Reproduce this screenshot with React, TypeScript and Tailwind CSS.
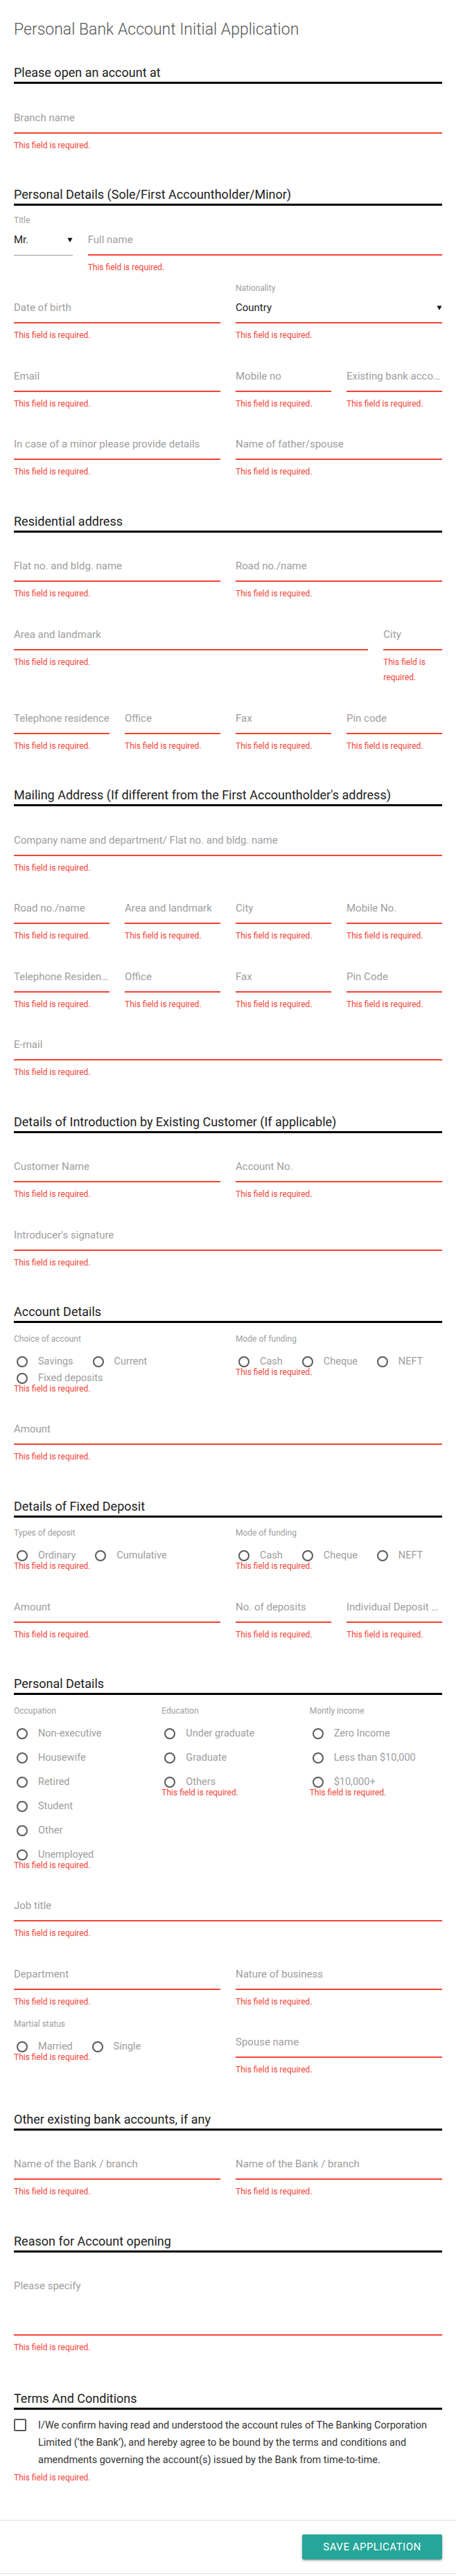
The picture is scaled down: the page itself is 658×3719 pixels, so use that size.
import React from "react";

const ERR = "This field is required.";

function Err() {
  return <div className="mt-[6px] text-[12px] leading-[22.5px] text-[#f44336]">{ERR}</div>;
}

function Field({ ph, span }: { ph: string; span: string }) {
  return (
    <div className={`${span} min-w-0 pt-[26px]`}>
      <input
        placeholder={ph}
        className="block h-[44px] w-full truncate border-b-2 border-[#f44336] bg-transparent text-[15px] text-[#212121] outline-none placeholder:text-[#9e9e9e]"
      />
      <Err />
    </div>
  );
}

function Caret() {
  return (
    <svg width="8" height="7" viewBox="0 0 8 7" className="shrink-0">
      <polygon points="0.5,0.5 7.5,0.5 4,6.8" fill="#111" />
    </svg>
  );
}

function SelectField({
  label,
  value,
  span,
  error,
}: {
  label: string;
  value: string;
  span: string;
  error?: boolean;
}) {
  return (
    <div className={`${span} min-w-0 pt-[12px]`}>
      <div className="text-[12px] leading-[14px] text-[#9e9e9e]">{label}</div>
      <div
        className={
          error
            ? "flex h-[44px] items-center justify-between border-b-2 border-[#f44336] text-[15px] text-[#212121]"
            : "flex h-[44px] items-center justify-between border-b border-[#9e9e9e] text-[15px] text-[#212121]"
        }
      >
        <span>{value}</span>
        <Caret />
      </div>
      {error ? <Err /> : null}
    </div>
  );
}

function Radio({ label }: { label: string }) {
  return (
    <div className="flex h-[24px] items-center whitespace-nowrap">
      <span className="ml-[4px] h-[16px] w-[16px] shrink-0 rounded-full border-2 border-[#5a5a5a]" />
      <span className="ml-[15px] text-[14.5px] text-[#9e9e9e]">{label}</span>
    </div>
  );
}

function RadioGroup({
  label,
  options,
  span,
  vertical,
}: {
  label: string;
  options: string[];
  span: string;
  vertical?: boolean;
}) {
  return (
    <div className={`${span} min-w-0 pt-[13px]`}>
      <div className="text-[12px] leading-[16px] text-[#9e9e9e]">{label}</div>
      <div
        className={
          vertical
            ? "mt-[13px] flex flex-col gap-y-[11px]"
            : "mt-[13px] flex flex-wrap gap-x-[24px]"
        }
      >
        {options.map((o) => (
          <Radio key={o} label={o} />
        ))}
      </div>
      <div className="-mt-[8px] text-[12px] leading-[22.5px] text-[#f44336]">{ERR}</div>
    </div>
  );
}

function Heading({ children, extra }: { children: React.ReactNode; extra?: string }) {
  return (
    <h5
      className={`${extra ?? "mt-[47px]"} mb-[1.5px] border-b-[3px] border-black text-[18px] leading-[26px] text-[#212121]`}
    >
      {children}
    </h5>
  );
}

function Grid({ children }: { children: React.ReactNode }) {
  return <div className="grid grid-cols-12 gap-x-[22px]">{children}</div>;
}

export default function App() {
  return (
    <div className="w-full border-b border-[#e0e0e0] bg-white font-['Roboto',sans-serif]">
      <div className="px-[20px]">
        <h1 className="pt-[25px] text-[23px] font-light leading-[36px] text-[#555]">
          Personal Bank Account Initial Application
        </h1>

        <Heading extra="mt-[31px]">Please open an account at</Heading>
        <Grid>
          <Field ph="Branch name" span="col-span-12" />
        </Grid>

        <Heading>Personal Details (Sole/First Accountholder/Minor)</Heading>
        <Grid>
          <SelectField label="Title" value="Mr." span="col-span-2" />
          <Field ph="Full name" span="col-span-10" />
          <Field ph="Date of birth" span="col-span-6" />
          <SelectField label="Nationality" value="Country" span="col-span-6" error />
          <Field ph="Email" span="col-span-6" />
          <Field ph="Mobile no" span="col-span-3" />
          <Field ph="Existing bank account no." span="col-span-3" />
          <Field ph="In case of a minor please provide details" span="col-span-6" />
          <Field ph="Name of father/spouse" span="col-span-6" />
        </Grid>

        <Heading>Residential address</Heading>
        <Grid>
          <Field ph="Flat no. and bldg. name" span="col-span-6" />
          <Field ph="Road no./name" span="col-span-6" />
          <Field ph="Area and landmark" span="col-span-10" />
          <Field ph="City" span="col-span-2" />
          <Field ph="Telephone residence" span="col-span-3" />
          <Field ph="Office" span="col-span-3" />
          <Field ph="Fax" span="col-span-3" />
          <Field ph="Pin code" span="col-span-3" />
        </Grid>

        <Heading>Mailing Address (If different from the First Accountholder's address)</Heading>
        <Grid>
          <Field ph="Company name and department/ Flat no. and bldg. name" span="col-span-12" />
          <Field ph="Road no./name" span="col-span-3" />
          <Field ph="Area and landmark" span="col-span-3" />
          <Field ph="City" span="col-span-3" />
          <Field ph="Mobile No." span="col-span-3" />
          <Field ph="Telephone Residence" span="col-span-3" />
          <Field ph="Office" span="col-span-3" />
          <Field ph="Fax" span="col-span-3" />
          <Field ph="Pin Code" span="col-span-3" />
          <Field ph="E-mail" span="col-span-12" />
        </Grid>

        <Heading>Details of Introduction by Existing Customer (If applicable)</Heading>
        <Grid>
          <Field ph="Customer Name" span="col-span-6" />
          <Field ph="Account No." span="col-span-6" />
          <Field ph="Introducer's signature" span="col-span-12" />
        </Grid>

        <Heading>Account Details</Heading>
        <Grid>
          <RadioGroup
            label="Choice of account"
            options={["Savings", "Current", "Fixed deposits"]}
            span="col-span-6"
          />
          <RadioGroup label="Mode of funding" options={["Cash", "Cheque", "NEFT"]} span="col-span-6" />
          <Field ph="Amount" span="col-span-12" />
        </Grid>

        <Heading>Details of Fixed Deposit</Heading>
        <Grid>
          <RadioGroup label="Types of deposit" options={["Ordinary", "Cumulative"]} span="col-span-6" />
          <RadioGroup label="Mode of funding" options={["Cash", "Cheque", "NEFT"]} span="col-span-6" />
          <Field ph="Amount" span="col-span-6" />
          <Field ph="No. of deposits" span="col-span-3" />
          <Field ph="Individual Deposit Amount" span="col-span-3" />
        </Grid>

        <Heading>Personal Details</Heading>
        <Grid>
          <RadioGroup
            label="Occupation"
            options={["Non-executive", "Housewife", "Retired", "Student", "Other", "Unemployed"]}
            span="col-span-4"
            vertical
          />
          <RadioGroup
            label="Education"
            options={["Under graduate", "Graduate", "Others"]}
            span="col-span-4"
            vertical
          />
          <RadioGroup
            label="Montly income"
            options={["Zero Income", "Less than $10,000", "$10,000+"]}
            span="col-span-4"
            vertical
          />
          <Field ph="Job title" span="col-span-12" />
          <Field ph="Department" span="col-span-6" />
          <Field ph="Nature of business" span="col-span-6" />
          <RadioGroup label="Martial status" options={["Married", "Single"]} span="col-span-6" />
          <Field ph="Spouse name" span="col-span-6" />
        </Grid>

        <Heading>Other existing bank accounts, if any</Heading>
        <Grid>
          <Field ph="Name of the Bank / branch" span="col-span-6" />
          <Field ph="Name of the Bank / branch" span="col-span-6" />
        </Grid>

        <Heading>Reason for Account opening</Heading>
        <div className="pt-[26px]">
          <textarea
            placeholder="Please specify"
            className="block h-[93px] w-full resize-none border-b-2 border-[#f44336] bg-transparent pt-[11px] text-[15px] leading-[20px] text-[#212121] outline-none placeholder:text-[#9e9e9e]"
          />
          <Err />
        </div>

        <Heading extra="mt-[49px]">Terms And Conditions</Heading>
        <div className="mt-[10px] flex">
          <span className="mt-[3px] h-[18px] w-[18px] shrink-0 rounded-[2px] border-2 border-[#5a5a5a]" />
          <p className="ml-[17px] text-[14.5px] leading-[25px] text-[#333]">
            I/We confirm having read and understood the account rules of The Banking Corporation Limited
            (‘the Bank’), and hereby agree to be bound by the terms and conditions and amendments governing
            the account(s) issued by the Bank from time-to-time.
          </p>
        </div>
        <div className="mt-[2px] text-[12px] leading-[22.5px] text-[#f44336]">{ERR}</div>
      </div>

      <div className="mt-[50px] flex justify-end border-t border-[#e0e0e0] px-[20px] py-[20px]">
        <button
          type="button"
          className="h-[36px] w-[202px] rounded-[2px] bg-[#26a69a] text-[15px] uppercase tracking-[0.5px] text-white shadow-[0_2px_2px_0_rgba(0,0,0,0.14),0_3px_1px_-2px_rgba(0,0,0,0.12),0_1px_5px_0_rgba(0,0,0,0.2)]"
        >
          Save application
        </button>
      </div>
    </div>
  );
}
